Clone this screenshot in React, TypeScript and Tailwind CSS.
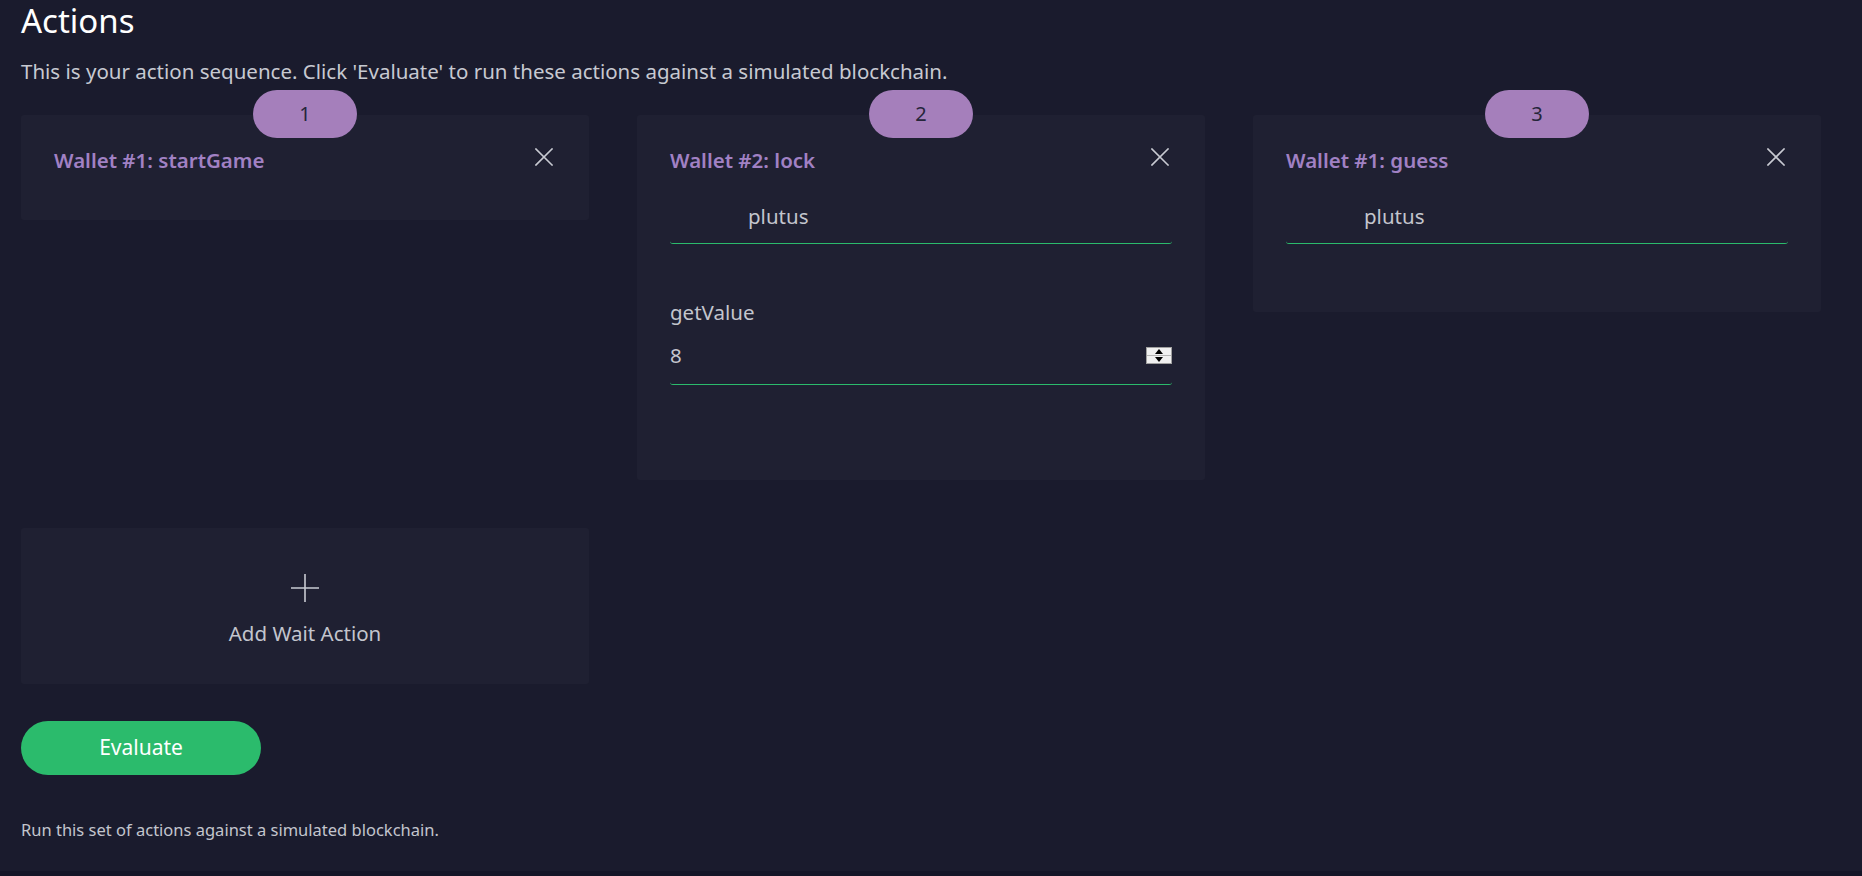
import React from "react";

const font = { fontFamily: '"Noto Sans", "Open Sans", sans-serif' };

function CloseIcon() {
  return (
    <svg width="18" height="18" viewBox="0 0 18 18" className="shrink-0 mr-[3px]">
      <path d="M1 1L17 17M17 1L1 17" stroke="#c8cad2" strokeWidth="1.6" strokeLinecap="square" />
    </svg>
  );
}

function Badge({ n }: { n: number }) {
  return (
    <div className="absolute left-1/2 -translate-x-1/2 -top-[25px] w-[104px] h-[48px] rounded-full bg-[#a57fbb] flex items-center justify-center text-[20px] text-[#25253a]">
      {n}
    </div>
  );
}

function Header({ title }: { title: string }) {
  return (
    <div className="flex items-start justify-between">
      <div className="text-[20.5px] leading-[24px] font-semibold text-[#a181c4]">{title}</div>
      <CloseIcon />
    </div>
  );
}

function TextField({ value }: { value: string }) {
  return (
    <div className="mt-[16px] pt-[14px] pb-[13px] pl-[78px] text-[20.5px] leading-[28px] text-[#c3c5cd] border-b border-[#2bbb6c] rounded-b-[3px]">
      {value}
    </div>
  );
}

function Spinner() {
  return (
    <div className="w-[26px] h-[17px] bg-[#f0f0f0] border border-[#a0a0a0] flex flex-col">
      <div className="flex-1 flex items-center justify-center border-b border-[#b5b5b5]">
        <svg width="8" height="5" viewBox="0 0 8 5"><path d="M4 0L8 5H0Z" fill="#000" /></svg>
      </div>
      <div className="flex-1 flex items-center justify-center">
        <svg width="8" height="5" viewBox="0 0 8 5"><path d="M0 0H8L4 5Z" fill="#000" /></svg>
      </div>
    </div>
  );
}

export default function App() {
  return (
    <div style={font} className="min-h-screen bg-[#1a1b2d] flex flex-col">
      <div className="flex-1 px-[21px]">
        <h1 className="mt-[1px] text-[33px] leading-[40px] text-white">Actions</h1>
        <p className="mt-[16px] text-[20.5px] leading-[28px] text-[#c7c9d1]">
          This is your action sequence. Click 'Evaluate' to run these actions against a simulated blockchain.
        </p>

        <div className="mt-[30px] grid grid-cols-[568px_568px_568px] gap-x-[48px] gap-y-[48px] items-start">
          <div className="relative bg-[#1f2032] rounded-[3px] px-[33px] pt-[33px] pb-[48px]">
            <Badge n={1} />
            <Header title="Wallet #1: startGame" />
          </div>

          <div className="relative bg-[#1f2032] rounded-[3px] px-[33px] pt-[33px] pb-[95px]">
            <Badge n={2} />
            <Header title="Wallet #2: lock" />
            <TextField value="plutus" />
            <div className="mt-[54px] text-[20.5px] leading-[28px] text-[#c3c5cd]">getValue</div>
            <div className="pt-[15px] pb-[15px] flex items-center justify-between text-[20.5px] leading-[28px] text-[#c3c5cd] border-b border-[#2bbb6c] rounded-b-[3px]">
              <span>8</span>
              <Spinner />
            </div>
          </div>

          <div className="relative bg-[#1f2032] rounded-[3px] px-[33px] pt-[33px] pb-[68px]">
            <Badge n={3} />
            <Header title="Wallet #1: guess" />
            <TextField value="plutus" />
          </div>

          <div className="bg-[#1f2032] rounded-[3px] flex flex-col items-center pt-[46px] pb-[37px]">
            <svg width="28" height="28" viewBox="0 0 28 28">
              <path d="M14 0V28M0 14H28" stroke="#c8cad2" strokeWidth="1.6" />
            </svg>
            <div className="mt-[17px] text-[20.5px] leading-[28px] text-[#c3c5cd]">Add Wait Action</div>
          </div>
        </div>

        <button className="mt-[37px] w-[240px] h-[54px] rounded-full bg-[#2bbb6c] text-white text-[21px] flex items-center justify-center">
          Evaluate
        </button>

        <p className="mt-[45px] text-[16.5px] leading-[20px] text-[#c3c5cd]">
          Run this set of actions against a simulated blockchain.
        </p>
      </div>
      <div className="h-[5px] bg-[#141527]" />
    </div>
  );
}
